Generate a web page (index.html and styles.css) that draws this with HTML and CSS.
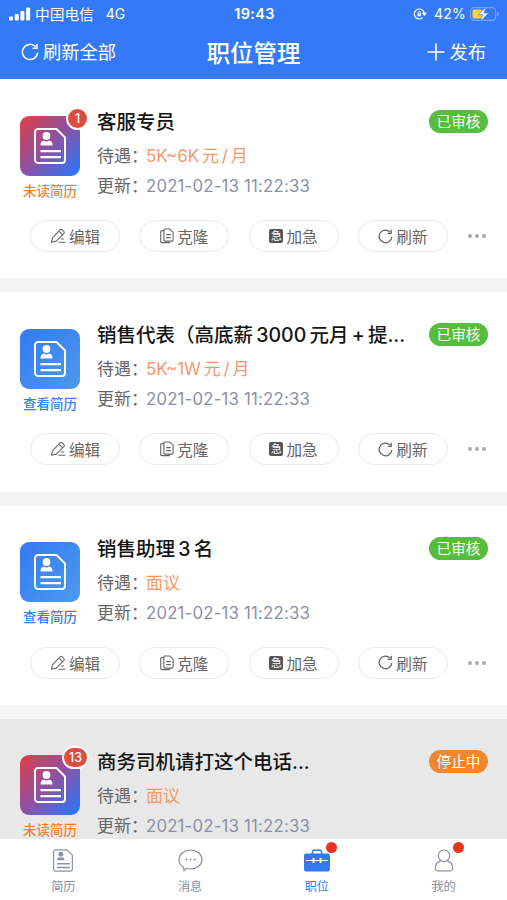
FILE: index.html
```html
<!DOCTYPE html>
<html lang="zh-CN">
<head>
    <meta charset="UTF-8">
    <meta name="viewport" content="width=device-width, initial-scale=1.0">
    <title>职位管理</title>
    <link rel="stylesheet" href="styles.css">
</head>
<body>
    <!-- 图标 -->
    <svg class="sprite" xmlns="http://www.w3.org/2000/svg">
        <symbol id="i-refresh" viewBox="0 0 18 18">
            <path d="M16.6 9.6A7.6 7.6 0 1 1 14.6 3.8M15.9 1v4.3h-4.3" fill="none" stroke="currentColor" stroke-width="1.5"/>
        </symbol>
        <symbol id="i-plus" viewBox="0 0 18 18">
            <path d="M9 .5v17M.5 9h17" fill="none" stroke="currentColor" stroke-width="1.6"/>
        </symbol>
        <symbol id="i-resume" viewBox="0 0 32 36">
            <path d="M4 1h18.5l8.5 8.5V32a3 3 0 0 1-3 3H4a3 3 0 0 1-3-3V4a3 3 0 0 1 3-3z" fill="none" stroke="currentColor" stroke-width="1.9" stroke-linejoin="round"/>
            <circle cx="12.5" cy="8" r="3.9" fill="currentColor"/>
            <path d="M6.5 17.5c0-3.5 1.500-4.800 3.500-4.800 1.500 1 3.500 1 5 0 2 0 3.500 1.300 3.500 4.800z" fill="currentColor"/>
            <path d="M6.5 23.2H27M6.5 29.2H27" fill="none" stroke="currentColor" stroke-width="2.2"/>
        </symbol>
        <symbol id="i-edit" viewBox="0 0 16 16">
            <path d="M1.5 14.3l.9-4.4 7.7-8a1.6 1.6 0 0 1 2.2 0l1.5 1.5a1.6 1.6 0 0 1 0 2.2l-7.6 7.5zM9 3.2l3.4 3.5M10.8 11H14M8.400 14.300h7" fill="none" stroke="currentColor" stroke-width="1.1" stroke-linejoin="round"/>
        </symbol>
        <symbol id="i-clone" viewBox="0 0 14 16">
            <path d="M4.3 1h5.4l3.4 3.2v7.9a1 1 0 0 1-1 1H4.900a1 1 0 0 1-1-1V1.600zM3.600 2.600H1.700a1 1 0 0 0-1 1v10a1 1 0 0 0 1 1h8.500M6.200 6.600h4.600M6.200 9.600h4.600" fill="none" stroke="currentColor" stroke-width="1.1"/>
        </symbol>
        <symbol id="i-chat" viewBox="0 0 25 23">
            <path d="M12.5 1C18.9 1 24 5.1 24 10.5S18.9 20 12.5 20c-1.700 0-3.200-.2-4.500-.7L6 22l-.6-3.900C2.600 16.500 1 13.700 1 10.500 1 5.100 6.100 1 12.500 1z" fill="none" stroke="currentColor" stroke-width="1.2" stroke-linejoin="round"/>
            <circle cx="8.3" cy="10.6" r="1" fill="currentColor"/><circle cx="12.5" cy="10.6" r="1" fill="currentColor"/><circle cx="16.7" cy="10.6" r="1" fill="currentColor"/>
        </symbol>
        <symbol id="i-case" viewBox="0 0 26 23">
            <path d="M8 5l.8-3c.1-.5.5-.8 1-.8h6.400c.5 0 .9.300 1 .8l.8 3" fill="none" stroke="currentColor" stroke-width="1.5"/>
            <rect y="4.5" width="26" height="18" rx="2" fill="currentColor"/>
            <path d="M2 11.5h6.500M10.500 11.500h5M17.500 11.500H24" stroke="#fff" stroke-width="1"/>
            <path d="M9.5 9v5M16.5 9v5" stroke="#fff" stroke-width="2"/>
        </symbol>
        <symbol id="i-user" viewBox="0 0 20 24">
            <circle cx="10" cy="7" r="6" fill="none" stroke="currentColor" stroke-width="1.2"/>
            <path d="M6.3 12.7C3 13.7 1 16.2 1 19.5c0 2.300 1.200 3.300 3.500 3.300h11c2.300 0 3.500-1 3.500-3.300 0-3.300-2-5.800-5.300-6.800" fill="none" stroke="currentColor" stroke-width="1.2"/>
        </symbol>
    </svg>

    <div class="app">
        <header class="header">
            <div class="status">
                <div class="carrier">
                    <svg width="22" height="14" viewBox="0 0 22 14" fill="#fff"><rect y="9.5" width="4" height="4" rx="1"/><rect x="5.7" y="7" width="4" height="6.5" rx="1"/><rect x="11.4" y="4" width="4" height="9.5" rx="1"/><rect x="17.1" y=".5" width="4" height="13" rx="1"/></svg>
                    <span class="name">中国电信</span>
                    <span>4G</span>
                </div>
                <div class="time">19:43</div>
                <div class="power">
                    <svg width="14" height="12" viewBox="0 0 14 12" fill="none" stroke="#fff"><path d="M11.3 5.5A5 5 0 1 0 9.8 9.6M9.8 5.3h3l-1.500 1.800z" stroke-width="1.2"/><rect x="4.5" y="5.5" width="3.6" height="2.8" fill="#fff" stroke="none"/><path d="M5.2 5.5V4.600a1.100 1.100 0 0 1 2.200 0v.9" stroke-width=".9"/></svg>
                    <span>42%</span>
                    <svg width="30" height="16" viewBox="0 0 30 16"><rect x=".6" y="1.6" width="25" height="12.8" rx="3.6" fill="none" stroke="#75a5fa" stroke-width="1.1"/><path d="M27.2 5.5c2.300.8 2.300 4.200 0 5z" fill="#75a5fa"/><rect x="2.5" y="3.5" width="9.5" height="9" rx="1.5" fill="#ffd338"/><path d="M16.5.5L8 8.800h4.600L10.300 15.500 18.500 7h-4.700z" fill="#fff" stroke="#347af6" stroke-width=".6"/></svg>
                </div>
            </div>
            <div class="nav">
                <a class="nav-link"><svg width="18" height="18"><use href="#i-refresh"/></svg><span>刷新全部</span></a>
                <h1>职位管理</h1>
                <a class="nav-link right"><svg width="18" height="18"><use href="#i-plus"/></svg><span>发布</span></a>
            </div>
        </header>

        <main class="list" id="list"></main>

        <nav class="tabs">
            <a class="tab"><svg width="20" height="23"><use href="#i-resume"/></svg><span>简历</span></a>
            <a class="tab"><svg width="25" height="23"><use href="#i-chat"/></svg><span>消息</span></a>
            <a class="tab active dot"><svg width="26" height="23"><use href="#i-case"/></svg><span>职位</span></a>
            <a class="tab dot"><svg width="20" height="23"><use href="#i-user"/></svg><span>我的</span></a>
        </nav>
    </div>

    <script src="main.js"></script>
</body>
</html>
```
FILE: styles.css
```css
* {
    box-sizing: border-box;
}
body {
    margin: 0;
    font-family: Inter, "Noto Sans CJK SC", sans-serif;
    color: #666;
    background: #f5f5f5;
}
.sprite {
    display: none;
}
svg {
    display: block;
    flex: none;
}
.app {
    display: flex;
    flex-direction: column;
    height: 900px;
    overflow: hidden;
}

/* 顶部 */
.header {
    flex: none;
    height: 79px;
    background: #347af6;
    color: #fff;
}
.status {
    display: grid;
    grid-template-columns: 1fr 60px 1fr;
    height: 27px;
    padding: 0 7px 0 9px;
    align-items: center;
    font-size: 14px;
}
.carrier, .power {
    display: flex;
    align-items: center;
    white-space: nowrap;
}
.carrier .name {
    margin: 0 12px 0 4px;
    font-size: 14.7px;
}
.time {
    text-align: center;
    font-weight: 600;
    font-size: 14.5px;
    letter-spacing: 0.3px;
}
.power {
    justify-content: flex-end;
    gap: 4px;
}
.power span {
    margin-left: 3px;
    letter-spacing: 0.2px;
}
.nav {
    display: grid;
    grid-template-columns: 1fr auto 1fr;
    height: 50px;
    padding: 0 21px;
    align-items: center;
}
.nav-link {
    display: flex;
    align-items: center;
    gap: 4px;
    font-size: 18.3px;
}
.nav-link span {
    margin-top: -2px;
}
.nav-link.right {
    justify-content: flex-end;
}
h1 {
    margin: -1px 0 0;
    font-size: 23.4px;
    font-weight: 500;
}

/* 职位列表 */
.list {
    flex: 1;
    min-height: 0;
    overflow: hidden;
}
.card {
    height: 199.3px;
    margin-bottom: 14px;
    padding: 29px 19px 0 20px;
    background: #fff;
}
.card.stopped {
    background: #e8e8e8;
}
.info {
    display: flex;
    height: 112px;
}
.resume {
    width: 60px;
    margin: 7.5px 17px 0 0;
    flex: none;
    text-align: center;
    color: #3b7cf0;
}
.resume.unread {
    color: #ee8434;
}
.thumb {
    position: relative;
    display: flex;
    width: 60px;
    height: 60px;
    align-items: center;
    justify-content: center;
    border-radius: 9px;
    color: #fff;
    background: linear-gradient(135deg, #347af5, #4d9aea);
}
.unread .thumb {
    background: linear-gradient(135deg, #e04043, #9050a0 48%, #3274f4 92%);
}
.count {
    position: absolute;
    top: -9px;
    right: -9px;
    min-width: 23px;
    height: 23px;
    padding: 0 5px;
    border: 2px solid #fff;
    border-radius: 12px;
    background: #dc4d3f;
    font-size: 12.5px;
    font-weight: 500;
    line-height: 19px;
}
.resume p {
    margin: 5px -5px 0;
    font-size: 13.5px;
    font-weight: 500;
    line-height: 20px;
    white-space: nowrap;
}
.detail {
    flex: 1;
    min-width: 0;
}
.top {
    display: flex;
    height: 27px;
    align-items: center;
    justify-content: space-between;
}
h2 {
    margin: 2px 0 0;
    color: #151515;
    font-size: 19.5px;
    font-weight: 500;
    line-height: 27px;
    white-space: nowrap;
}
.state {
    width: 59px;
    height: 23px;
    border-radius: 12px;
    background: #56be3c;
    color: #fff;
    font-size: 14.6px;
    line-height: 24px;
    text-align: center;
}
.stopped .state {
    background: #ef872f;
}
.row {
    display: flex;
    height: 30px;
    align-items: center;
    font-size: 17px;
    line-height: 30px;
    white-space: nowrap;
}
.row:nth-child(2) {
    margin-top: 6px;
}
.row .key {
    width: 49px;
    font-feature-settings: "halt";
}
.row .pay {
    color: #f5996b;
}
.row .date {
    color: #8b8fa9;
    font-size: 16.8px;
    letter-spacing: 0.18px;
}
.actions {
    display: flex;
    gap: 19.3px;
    margin-left: 10px;
    align-items: center;
}
.btn {
    display: flex;
    width: 90px;
    height: 32px;
    align-items: center;
    justify-content: center;
    gap: 3px;
    border: 1px solid #ebebeb;
    border-radius: 16px;
    font-size: 15.6px;
    white-space: nowrap;
}
.urgent {
    width: 14px;
    height: 14px;
    border-radius: 2px;
    background: #555;
    color: #fff;
    font-size: 11px;
    line-height: 14px;
    text-align: center;
}
.more {
    display: flex;
    gap: 3px;
    margin-left: 1px;
}
.more i {
    width: 4px;
    height: 4px;
    border-radius: 50%;
    background: #aaa;
}

/* 底部导航 */
.tabs {
    display: flex;
    flex: none;
    height: 61.5px;
    background: #fff;
}
.tab {
    position: relative;
    display: flex;
    flex: 1;
    flex-direction: column;
    align-items: center;
    padding-top: 10.5px;
    color: #8b8fa9;
    font-size: 12.2px;
    line-height: 18px;
}
.tab span {
    margin-top: 6px;
}
.tab.active {
    color: #347af6;
}
.dot::after {
    content: "";
    position: absolute;
    top: 3px;
    left: calc(50% + 9px);
    width: 11px;
    height: 11px;
    border-radius: 50%;
    background: #ea3323;
}
```
FILE: main.js
```javascript
// 职位数据
const jobs = [
    { title: '客服专员', pay: '5K~6K 元 / 月', unread: 1, state: '已审核' },
    { title: '销售代表（高底薪 3000 元月 + 提...', pay: '5K~1W 元 / 月', unread: 0, state: '已审核' },
    { title: '销售助理 3 名', pay: '面议', unread: 0, state: '已审核' },
    { title: '商务司机请打这个电话...', pay: '面议', unread: 13, state: '停止中' }
];

function icon(id, w, h) {
    return `<svg width="${w}" height="${h}"><use href="#i-${id}"/></svg>`;
}

// 数字两侧的窄空格
function spaced(text) {
    return text.replace(/ /g, '\u2006');
}

// 停止中的职位没有操作按钮
const actions = `
        <div class="actions">
            <a class="btn">${icon('edit', 16, 16)}编辑</a>
            <a class="btn">${icon('clone', 14, 16)}克隆</a>
            <a class="btn"><span class="urgent">急</span>加急</a>
            <a class="btn">${icon('refresh', 15, 15)}刷新</a>
            <span class="more"><i></i><i></i><i></i></span>
        </div>`;

document.getElementById('list').innerHTML = jobs.map(job => `
    <section class="card ${job.state === '停止中' ? 'stopped' : ''}">
        <div class="info">
            <div class="resume ${job.unread ? 'unread' : ''}">
                <div class="thumb">${icon('resume', 32, 36)}${job.unread ? `<span class="count">${job.unread}</span>` : ''}</div>
                <p>${job.unread ? '未读简历' : '查看简历'}</p>
            </div>
            <div class="detail">
                <div class="top"><h2>${spaced(job.title)}</h2><span class="state">${job.state}</span></div>
                <div class="row"><span class="key">待遇：</span><span class="pay">${spaced(job.pay)}</span></div>
                <div class="row"><span class="key">更新：</span><span class="date">2021-02-13 11:22:33</span></div>
            </div>
        </div>
        ${job.state === '停止中' ? '' : actions}
    </section>`).join('');
```
